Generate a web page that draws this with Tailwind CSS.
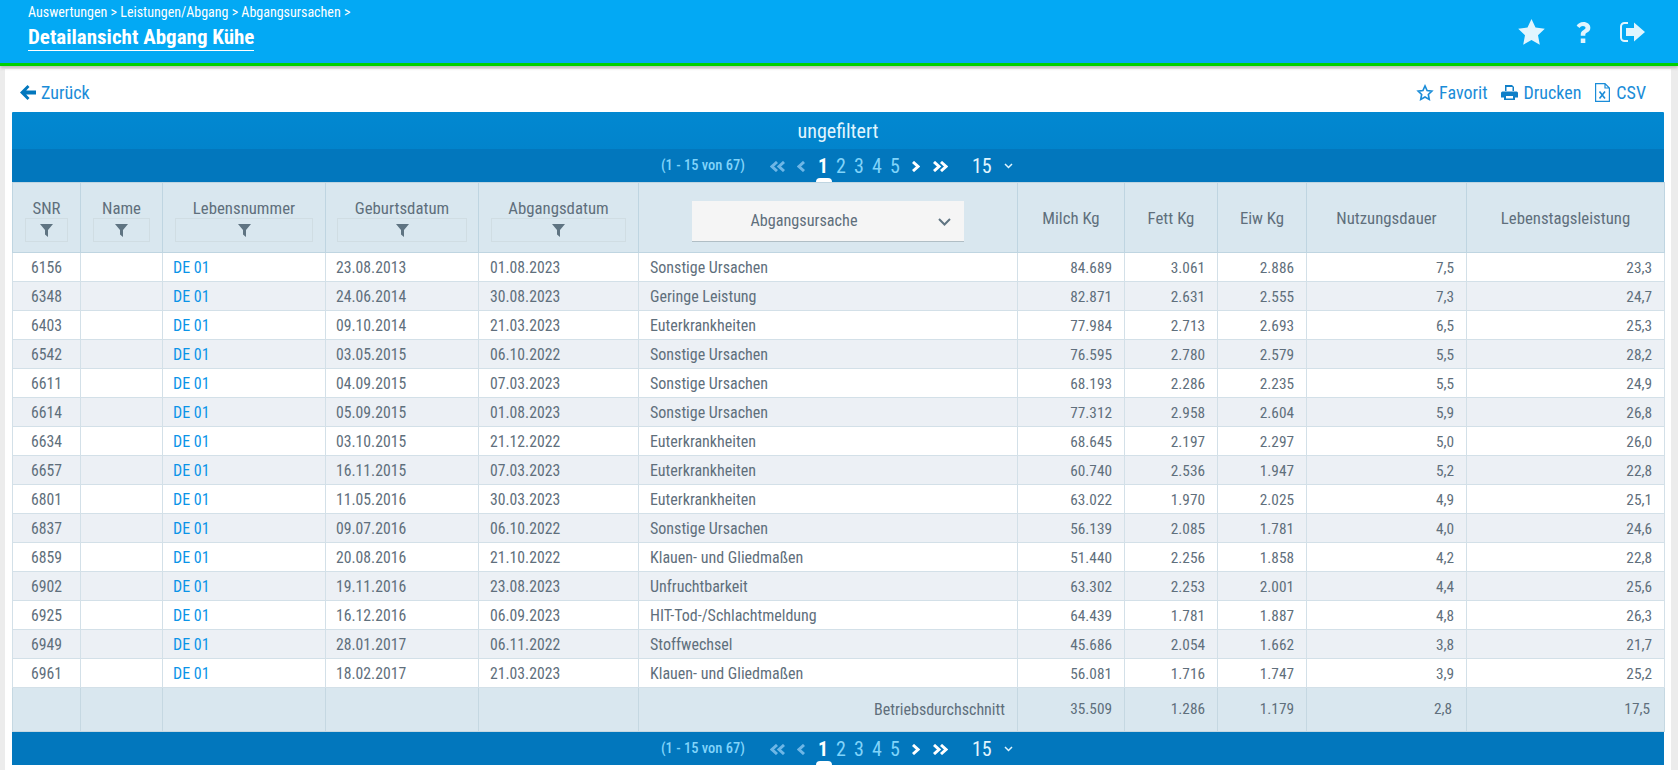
<!DOCTYPE html>
<html lang="de">
<head>
  <meta charset="UTF-8">
  <title>Detailansicht Abgang Kühe</title>
  <script src="https://cdn.jsdelivr.net/npm/@tailwindcss/browser@4"></script>
</head>
<body class="bg-[#ececec] h-[770px] overflow-hidden font-['Roboto',sans-serif] font-stretch-condensed text-[#5f6f7c]">
  <header class="h-[66px] bg-[#03a9f4] border-b-[3px] border-[#00d000] flex justify-between shadow-[0_2px_3px_#bbb] relative">
    <div class="pl-7 pt-[3px] text-white">
      <div class="text-[14px] leading-[18px]">Auswertungen &gt; Leistungen/Abgang &gt; Abgangsursachen &gt;</div>
      <h1 class="text-[21px] leading-[26px] font-bold w-fit border-b border-white mt-[3px]">Detailansicht Abgang Kühe</h1>
    </div>
    <div class="flex items-center pr-[33px] pt-[1px] text-[#e1f5fe]">
      <svg class="mr-[31px]" width="27" height="26" viewBox="0 0 27 26" fill="currentColor"><path d="M13.5 0l4 8.6 9.3 1.2-6.8 6.5 1.8 9.4-8.3-4.6-8.3 4.600 1.800-9.400L.2 9.800l9.300-1.200z"/></svg>
      <svg class="mr-[29px]" width="15" height="21" viewBox="0 0 15 23" fill="currentColor"><path d="M7.6 0C3.6 0 1.3 1.9 0 4.2l3.2 2.4c.9-1.3 1.900-2.200 3.700-2.200 1.500 0 2.800.8 2.800 2 0 1.200-.9 1.800-2.400 2.600C5.400 10 4.500 11.300 4.500 13.600v1.400h5v-1c0-1.200.5-1.800 2-2.600 2-1.100 3.500-2.500 3.500-5.200C15 2.500 11.300 0 7.600 0zM4.500 18h5v5h-5z"/></svg>
      <svg width="25" height="20" viewBox="0 0 25 20" fill="currentColor"><path d="M8 0v2H4.500A2.500 2.500 0 0 0 2 4.500v11A2.500 2.500 0 0 0 4.500 18H8v2H4.500A4.500 4.500 0 0 1 0 15.500v-11A4.500 4.500 0 0 1 4.500 0z"/><path d="M6 6h8V.5L25 10 14 19.500V14H6z"/></svg>
    </div>
  </header>

  <main class="ml-[5px] mr-[7px] mt-[3px] h-[701px] bg-white px-[7px] pt-[7px]">
    <div class="flex justify-between h-[36px] items-center text-[#1a8cd8] text-[18px] pb-[3px]">
      <a class="flex items-center gap-[5px] pl-[8px]" href="#">
        <svg width="16" height="15" viewBox="0 0 16 15" fill="#0277bd"><path d="M7.500 0l2 2-3.300 3.500H16v4H6.200L9.500 13l-2 2L0 7.500z"/></svg>
        Zurück
      </a>
      <div class="flex items-center gap-[14px] pr-[18px]">
        <a class="flex items-center gap-[5px]" href="#">
          <svg width="18" height="17" viewBox="0 0 27 26" fill="none" stroke="currentColor" stroke-width="2.500"><path d="M13.500 3l3.200 7 7.300 1-5.400 5.100 1.400 7.400-6.500-3.600-6.500 3.600 1.400-7.400L3 11l7.300-1z"/></svg>
          Favorit
        </a>
        <a class="flex items-center gap-[5px]" href="#">
          <svg width="17" height="15" viewBox="0 0 17 15" fill="#0f7fc8"><path d="M4 0h7l2 2v4h-1.500V2H5.500v4H4zM1.500 6.500h14A1.500 1.500 0 0 1 17 8v4.500h-3V15H3v-2.500H0V8a1.500 1.500 0 0 1 1.500-1.500zM5 11v2.500h7V11z"/></svg>
          Drucken
        </a>
        <a class="flex items-center gap-[6px]" href="#">
          <svg width="15" height="19" viewBox="0 0 15 19" fill="none" stroke="currentColor" stroke-width="1.200"><path d="M.6.6h9.400L14.400 5v13.400H.6zM10 .6V5h4.400"/><path d="M4.500 8.500l5.500 7M10 8.500l-5.500 7" stroke-width="1.600"/></svg>
          CSV
        </a>
      </div>
    </div>

    <section class="w-[1652px]">
      <div class="h-[37px] bg-gradient-to-b from-[#0288d1] to-[#0284cc] text-[#e1f5fe] text-[20px] flex items-center justify-center rounded-t-[1px]">ungefiltert</div>
      <div class="h-[33px] bg-[#0277bd] flex items-center relative pl-[649px] text-[#e1f5fe]">
        <span class="text-[#81d4fa] text-[14.5px] font-medium w-[109px]">(1 - 15 von 67)</span>
        <span id="pager-top" class="flex items-center pt-[1px]"></span>
        <span class="absolute bottom-0 left-[804px] w-[16px] h-[4px] bg-white rounded-t-full"></span>
      </div>

      <table class="w-full table-fixed border-collapse text-[15.3px]">
        <colgroup>
          <col class="w-[68px]"><col class="w-[82px]"><col class="w-[163px]"><col class="w-[153px]"><col class="w-[160px]"><col class="w-[379px]"><col class="w-[107px]"><col class="w-[93px]"><col class="w-[89px]"><col class="w-[160px]"><col class="w-[198px]">
        </colgroup>
        <thead>
          <tr class="h-[70px] bg-[#d9e7ef] text-[16.8px]">
            <th class="font-normal border border-[#bfd5e1] align-top pt-[15px]"><div class="leading-[20px]">SNR</div><div class="mx-auto w-[43px] h-[24px] border border-[#d0dde3] flex items-center justify-center"><svg width="13" height="13" viewBox="0 0 13 13" fill="#5f7482"><path d="M0 0h13L8 6v7L5 10.500V6z"/></svg></div></th>
            <th class="font-normal border border-[#bfd5e1] align-top pt-[15px]"><div class="leading-[20px]">Name</div><div class="mx-auto w-[57px] h-[24px] border border-[#d0dde3] flex items-center justify-center"><svg width="13" height="13" viewBox="0 0 13 13" fill="#5f7482"><path d="M0 0h13L8 6v7L5 10.500V6z"/></svg></div></th>
            <th class="font-normal border border-[#bfd5e1] align-top pt-[15px]"><div class="leading-[20px]">Lebensnummer</div><div class="mx-auto w-[138px] h-[24px] border border-[#d0dde3] flex items-center justify-center"><svg width="13" height="13" viewBox="0 0 13 13" fill="#5f7482"><path d="M0 0h13L8 6v7L5 10.500V6z"/></svg></div></th>
            <th class="font-normal border border-[#bfd5e1] align-top pt-[15px]"><div class="leading-[20px]">Geburtsdatum</div><div class="mx-auto w-[130px] h-[24px] border border-[#d0dde3] flex items-center justify-center"><svg width="13" height="13" viewBox="0 0 13 13" fill="#5f7482"><path d="M0 0h13L8 6v7L5 10.500V6z"/></svg></div></th>
            <th class="font-normal border border-[#bfd5e1] align-top pt-[15px]"><div class="leading-[20px]">Abgangsdatum</div><div class="mx-auto w-[135px] h-[24px] border border-[#d0dde3] flex items-center justify-center"><svg width="13" height="13" viewBox="0 0 13 13" fill="#5f7482"><path d="M0 0h13L8 6v7L5 10.500V6z"/></svg></div></th>
            <th class="font-normal border border-[#bfd5e1] text-[16.2px]">
              <div class="mx-auto mt-[8px] w-[272px] h-[41px] pt-[1px] bg-[#f5f5f5] border-b border-[#b0bec5] flex items-center justify-center relative pr-[48px]">
                Abgangsursache
                <svg class="absolute right-[13px] top-[17px]" width="13" height="8" viewBox="0 0 13 8" fill="none" stroke="#5f7482" stroke-width="2"><path d="M1 1l5.500 5.500L12 1"/></svg>
              </div>
            </th>
            <th class="font-normal border border-[#bfd5e1] pt-[3px]">Milch Kg</th>
            <th class="font-normal border border-[#bfd5e1] pt-[3px]">Fett Kg</th>
            <th class="font-normal border border-[#bfd5e1] pt-[3px]">Eiw Kg</th>
            <th class="font-normal border border-[#bfd5e1] pt-[3px]">Nutzungsdauer</th>
            <th class="font-normal border border-[#bfd5e1] pt-[3px]">Lebenstagsleistung</th>
          </tr>
        </thead>
        <tbody id="rows"></tbody>
        <tfoot>
          <tr class="h-[44px] bg-[#d9e7ef]">
            <td class="border border-[#c5d8e2]"></td>
            <td class="border border-[#c5d8e2]"></td>
            <td class="border border-[#c5d8e2]"></td>
            <td class="border border-[#c5d8e2]"></td>
            <td class="border border-[#c5d8e2]"></td>
            <td class="border border-[#c5d8e2] text-right pr-[12px] text-[16px]">Betriebsdurchschnitt</td>
            <td class="border border-[#c5d8e2] text-right pr-[12px]">35.509</td>
            <td class="border border-[#c5d8e2] text-right pr-[12px]">1.286</td>
            <td class="border border-[#c5d8e2] text-right pr-[12px]">1.179</td>
            <td class="border border-[#c5d8e2] text-right pr-[14px]">2,8</td>
            <td class="border border-[#c5d8e2] text-right pr-[14px]">17,5</td>
          </tr>
        </tfoot>
      </table>

      <div class="h-[33px] bg-[#0277bd] flex items-center relative pl-[649px] text-[#e1f5fe]">
        <span class="text-[#81d4fa] text-[14.5px] font-medium w-[109px]">(1 - 15 von 67)</span>
        <span id="pager-bottom" class="flex items-center pt-[1px]"></span>
        <span class="absolute bottom-0 left-[804px] w-[16px] h-[4px] bg-white rounded-t-full"></span>
      </div>
    </section>
  </main>

  <script>
    const data = [
      ["6156","23.08.2013","01.08.2023","Sonstige Ursachen","84.689","3.061","2.886","7,5","23,3"],
      ["6348","24.06.2014","30.08.2023","Geringe Leistung","82.871","2.631","2.555","7,3","24,7"],
      ["6403","09.10.2014","21.03.2023","Euterkrankheiten","77.984","2.713","2.693","6,5","25,3"],
      ["6542","03.05.2015","06.10.2022","Sonstige Ursachen","76.595","2.780","2.579","5,5","28,2"],
      ["6611","04.09.2015","07.03.2023","Sonstige Ursachen","68.193","2.286","2.235","5,5","24,9"],
      ["6614","05.09.2015","01.08.2023","Sonstige Ursachen","77.312","2.958","2.604","5,9","26,8"],
      ["6634","03.10.2015","21.12.2022","Euterkrankheiten","68.645","2.197","2.297","5,0","26,0"],
      ["6657","16.11.2015","07.03.2023","Euterkrankheiten","60.740","2.536","1.947","5,2","22,8"],
      ["6801","11.05.2016","30.03.2023","Euterkrankheiten","63.022","1.970","2.025","4,9","25,1"],
      ["6837","09.07.2016","06.10.2022","Sonstige Ursachen","56.139","2.085","1.781","4,0","24,6"],
      ["6859","20.08.2016","21.10.2022","Klauen- und Gliedmaßen","51.440","2.256","1.858","4,2","22,8"],
      ["6902","19.11.2016","23.08.2023","Unfruchtbarkeit","63.302","2.253","2.001","4,4","25,6"],
      ["6925","16.12.2016","06.09.2023","HIT-Tod-/Schlachtmeldung","64.439","1.781","1.887","4,8","26,3"],
      ["6949","28.01.2017","06.11.2022","Stoffwechsel","45.686","2.054","1.662","3,8","21,7"],
      ["6961","18.02.2017","21.03.2023","Klauen- und Gliedmaßen","56.081","1.716","1.747","3,9","25,2"]
    ]

    document.getElementById("rows").innerHTML = data.map((r, i) => `
      <tr class="h-[29px] ${i % 2 ? "bg-[#ecf0f5]" : "bg-white"}">
        <td class="border border-[#d3e0e8] pt-[2px] text-center text-[15.7px]">${r[0]}</td>
        <td class="border border-[#d3e0e8]"></td>
        <td class="border border-[#d3e0e8] pt-[2px] pl-[10px] text-[16px] text-[#0a94e8]">DE 01</td>
        <td class="border border-[#d3e0e8] pt-[2px] pl-[10px] text-[15.7px]">${r[1]}</td>
        <td class="border border-[#d3e0e8] pt-[2px] pl-[11px] text-[15.7px]">${r[2]}</td>
        <td class="border border-[#d3e0e8] pt-[2px] pl-[11px] text-[16px]">${r[3]}</td>
        <td class="border border-[#d3e0e8] pt-[2px] text-right pr-[12px]">${r[4]}</td>
        <td class="border border-[#d3e0e8] pt-[2px] text-right pr-[12px]">${r[5]}</td>
        <td class="border border-[#d3e0e8] pt-[2px] text-right pr-[12px]">${r[6]}</td>
        <td class="border border-[#d3e0e8] pt-[2px] text-right pr-[12px]">${r[7]}</td>
        <td class="border border-[#d3e0e8] pt-[2px] text-right pr-[12px]">${r[8]}</td>
      </tr>`).join("")

    const pager = `
      <svg class="mr-[12px]" width="15" height="11" viewBox="0 0 15 11" fill="none" stroke="#6db6e6" stroke-width="3"><path d="M7 1L2 5.500 7 10M14 1L9 5.500 14 10"/></svg>
      <svg class="mr-[9px]" width="8" height="11" viewBox="0 0 8 11" fill="none" stroke="#6db6e6" stroke-width="3"><path d="M7 1L2 5.500 7 10"/></svg>
      <span class="flex items-center text-[20px] leading-[24px] text-[#81d4fa]">
        <span class="w-[18px] text-center text-white font-bold">1</span><span class="w-[18px] text-center">2</span><span class="w-[18px] text-center">3</span><span class="w-[18px] text-center">4</span><span class="w-[18px] text-center">5</span>
      </span>
      <svg class="ml-[8px] mr-[13px]" width="8" height="11" viewBox="0 0 8 11" fill="none" stroke="white" stroke-width="3"><path d="M1 1l5 4.500L1 10"/></svg>
      <svg class="mr-[24px]" width="15" height="11" viewBox="0 0 15 11" fill="none" stroke="white" stroke-width="3"><path d="M1 1l5 4.500L1 10M8 1l5 4.500L8 10"/></svg>
      <span class="text-[20px] leading-[24px] text-[#e1f5fe] mr-[12px]">15</span>
      <svg width="9" height="6" viewBox="0 0 9 6" fill="none" stroke="#e1f5fe" stroke-width="1.500"><path d="M1 1l3.500 3.500L8 1"/></svg>`
    document.getElementById("pager-top").innerHTML = pager
    document.getElementById("pager-bottom").innerHTML = pager
  </script>
</body>
</html>
